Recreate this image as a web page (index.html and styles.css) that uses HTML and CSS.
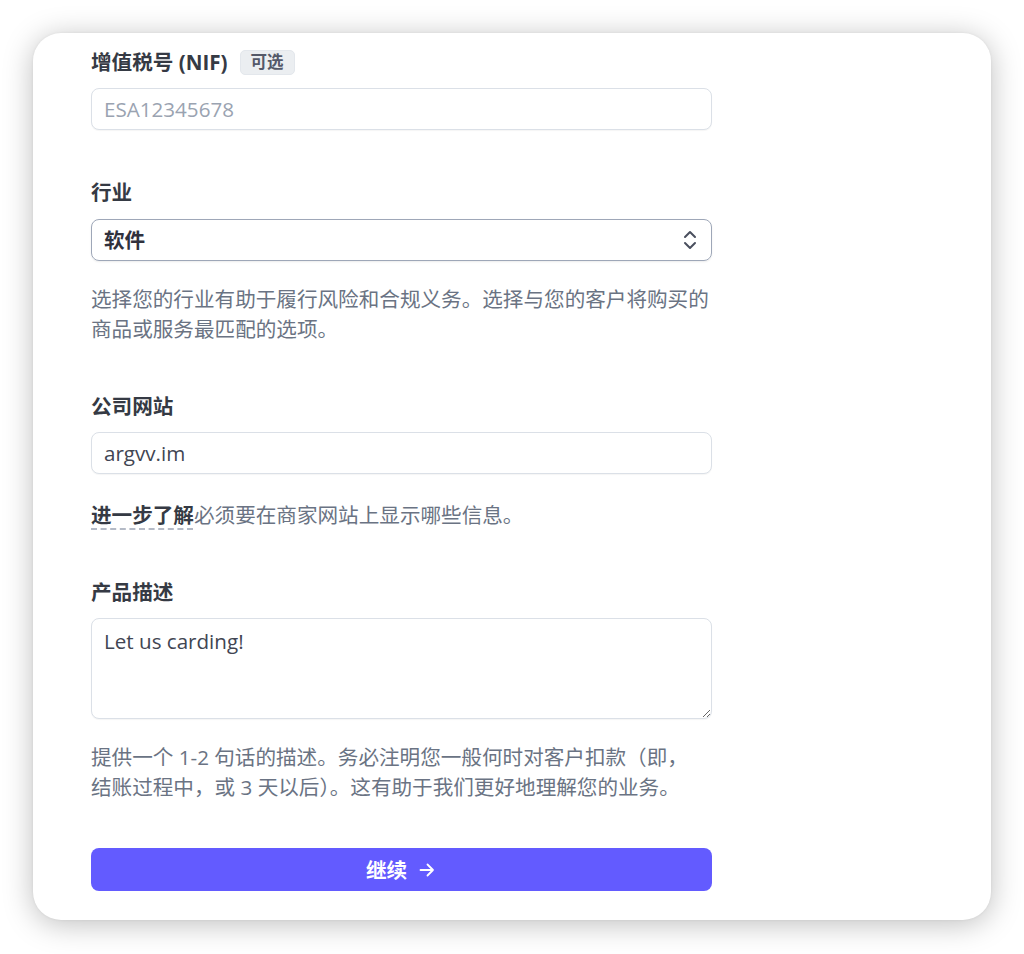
FILE: index.html
```html
<!DOCTYPE html>
<html lang="zh-CN">
<head>
<meta charset="utf-8">
<title>业务详情</title>
<link rel="stylesheet" href="styles.css">
</head>
<body>
<div class="page">
<div class="card">
  <form class="form">
    <div class="field">
      <div class="label">增值税号 (NIF)<span class="badge">可选</span></div>
      <input class="input" type="text" placeholder="ESA12345678">
    </div>

    <div class="field">
      <div class="label label-select">行业</div>
      <div class="select">
        <span class="select-value">软件</span>
        <svg class="chevrons" width="16" height="22" viewBox="0 0 16 22" aria-hidden="true">
          <path d="M3 8 L8 3 L13 8" fill="none" stroke="#4a4f5e" stroke-width="2" stroke-linecap="round" stroke-linejoin="round"/>
          <path d="M3 14 L8 19 L13 14" fill="none" stroke="#4a4f5e" stroke-width="2" stroke-linecap="round" stroke-linejoin="round"/>
        </svg>
      </div>
      <p class="help">选择您的行业有助于履行风险和合规义务。选择与您的客户将购买的<br>商品或服务最匹配的选项。</p>
    </div>

    <div class="field">
      <div class="label">公司网站</div>
      <input class="input" type="text" value="argvv.im">
      <p class="help help-link"><span class="learn">进一步了解</span>必须要在商家网站上显示哪些信息。</p>
    </div>

    <div class="field">
      <div class="label">产品描述</div>
      <textarea class="textarea">Let us carding!</textarea>
      <p class="help">提供一个 1-2 句话的描述。务必注明您一般何时对客户扣款（即，<br>结账过程中，或 3 天以后）。这有助于我们更好地理解您的业务。</p>
    </div>

    <button class="button" type="button">继续
      <svg class="arrow" width="20" height="20" viewBox="0 0 20 20" aria-hidden="true">
        <path d="M3.5 10 H16 M10.5 4.5 L16 10 L10.5 15.5" fill="none" stroke="#ffffff" stroke-width="1.8" stroke-linecap="round" stroke-linejoin="round"/>
      </svg>
    </button>
  </form>
</div>
</div>
</body>
</html>
```

FILE: styles.css
```css
* {
  box-sizing: border-box;
}

html, body {
  margin: 0;
  padding: 0;
  background: #ffffff;
}

body {
  font-family: "Open Sans", "Noto Sans CJK SC", sans-serif;
  font-size: 20.6px;
  line-height: 30px;
  color: #30313d;
}

.page {
  min-height: 954px;
  padding: 33px 0 34px 33px;
}

.card {
  width: 958px;
  height: 887px;
  background: #ffffff;
  border-radius: 28px;
  box-shadow: 0 4px 30px rgba(0, 0, 0, 0.26), 0 0 3px rgba(0, 0, 0, 0.06);
  padding: 14px 0 0 58px;
}

.form {
  width: 621px;
  display: flex;
  flex-direction: column;
  gap: 47px;
}

.field {
  display: flex;
  flex-direction: column;
}

.label {
  display: flex;
  align-items: center;
  height: 30px;
  font-weight: 700;
  color: #353a44;
  margin-bottom: 11px;
}

.label-select {
  margin-bottom: 12px;
}

.badge {
  display: inline-flex;
  align-items: center;
  height: 25px;
  margin-left: 12px;
  padding: 0 10px;
  background: #ebeef1;
  border: 1px solid #e3e7ec;
  border-radius: 5px;
  font-size: 16.5px;
  font-weight: 700;
  color: #545969;
  line-height: 1;
}

.input {
  display: block;
  width: 100%;
  height: 42px;
  padding: 0 12px;
  border: 1px solid #dbe0e7;
  border-radius: 8px;
  background: #ffffff;
  font: inherit;
  font-size: 20.6px;
  color: #414552;
  outline: none;
  box-shadow: 0 1px 1px rgba(0, 0, 0, 0.04);
}

.input::placeholder {
  color: #9aa3b1;
  opacity: 1;
}

.select {
  display: flex;
  align-items: center;
  justify-content: space-between;
  height: 42px;
  padding: 0 13px 0 12px;
  border: 1px solid #9ea7b8;
  border-radius: 8px;
  box-shadow: 0 1px 2px rgba(0, 0, 0, 0.08);
}

.select-value {
  font-weight: 700;
  color: #30313d;
}

.chevrons {
  display: block;
}

.help {
  margin: 23px 0 0;
  color: #6a7383;
  white-space: nowrap;
}

.help-link {
  margin-top: 26px;
}

.learn {
  font-weight: 700;
  color: #353a44;
  text-decoration: underline dashed #b4bac6;
  text-decoration-thickness: 1.5px;
  text-underline-offset: 5px;
}

.textarea {
  display: block;
  width: 100%;
  height: 101px;
  padding: 7px 12px;
  border: 1px solid #dbe0e7;
  border-radius: 8px;
  font: inherit;
  font-size: 20.6px;
  line-height: 30px;
  color: #414552;
  outline: none;
  resize: vertical;
  box-shadow: 0 1px 1px rgba(0, 0, 0, 0.04);
}

.button {
  display: flex;
  align-items: center;
  justify-content: center;
  gap: 10px;
  width: 100%;
  height: 43px;
  margin-top: -1px;
  border: none;
  border-radius: 8px;
  background: #635bff;
  color: #ffffff;
  font: inherit;
  font-size: 20.6px;
  font-weight: 700;
  cursor: pointer;
}

.arrow {
  display: block;
}
```
